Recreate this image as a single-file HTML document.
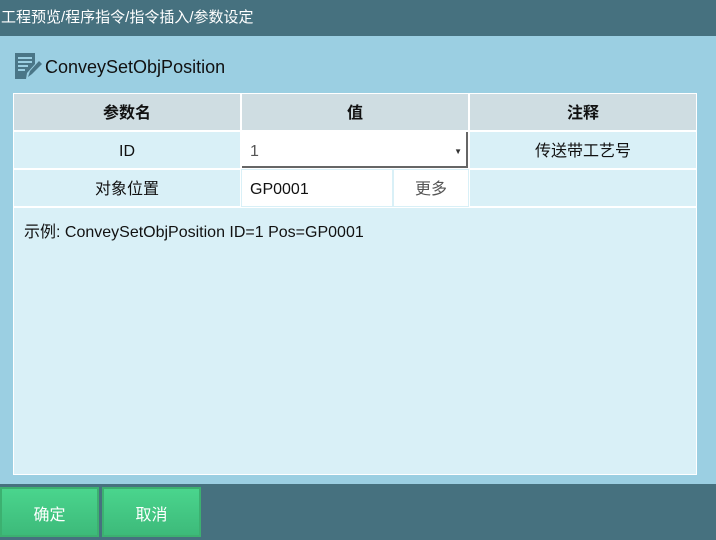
<!DOCTYPE html>
<html><head><meta charset="utf-8"><style>
*{margin:0;padding:0;box-sizing:border-box}
body{width:716px;height:540px;overflow:hidden;background:#9bcfe2;font-family:"Liberation Sans","Noto Sans CJK SC",sans-serif;position:relative}
.top{position:absolute;left:0;top:0;width:716px;height:36px;background:#46717f;color:#fff;font-size:15px;line-height:36px;padding-left:1px}
.title{position:absolute;left:45px;top:57px;font-size:18px;color:#111}
.ic{position:absolute;left:14px;top:52px}
.tbl{position:absolute;left:13px;top:93px;width:684px;height:115px;background:#fff}
.c{position:absolute;font-size:16px;color:#111;text-align:center;line-height:36px;height:36px;padding-top:2px;white-space:nowrap}
.h{background:#cfdde2;font-weight:bold}
.r{background:#d9f0f7}
.w{background:#fff;text-align:left;padding-left:8px}
.ex{position:absolute;left:13px;top:207px;width:684px;height:268px;background:#d9f0f7;border:1px solid #fff;font-size:16px;color:#111;padding:10px 10px}
.bot{position:absolute;left:0;top:484px;width:716px;height:56px;background:#46717f}
.btn{position:absolute;top:487px;width:99px;height:50px;background:linear-gradient(#4ad58d,#3dba7a);border:2px solid #3cb070;color:#fff;font-size:16px;line-height:46px;padding-top:4px;text-align:center}
</style></head><body>
<div class="top">工程预览/程序指令/指令插入/参数设定</div>
<svg class="ic" width="28" height="28" viewBox="0 0 28 28"><path d="M1 1h20v11l-8 9-1 6H1z" fill="#4a7687"/><path d="M4 6h14M4 10h14M4 14h10M4 18h7" stroke="#9bcfe2" stroke-width="2"/><path d="M14 25l2-6 9-10 3 3-10 10z" fill="#4a7687"/></svg>
<div class="title">ConveySetObjPosition</div>
<div class="tbl"></div>
<div class="c h" style="left:14px;top:94px;width:226px">参数名</div>
<div class="c h" style="left:242px;top:94px;width:226px">值</div>
<div class="c h" style="left:470px;top:94px;width:226px">注释</div>
<div class="c r" style="left:14px;top:132px;width:226px">ID</div>
<div class="c w" style="left:242px;top:132px;width:226px;color:#555;border-right:2px solid #666;border-bottom:2px solid #666">1<span style="position:absolute;right:4px;top:2px;font-size:8px;color:#333">▼</span></div>
<div class="c r" style="left:470px;top:132px;width:226px">传送带工艺号</div>
<div class="c r" style="left:14px;top:170px;width:226px">对象位置</div>
<div class="c w" style="left:241px;top:169px;width:228px;height:38px;border:1px solid #d9f0f7">GP0001</div>
<div class="c" style="left:392px;top:170px;width:76px;background:#fff;color:#555;border-left:2px solid #d9f0f7">更多</div>
<div class="c r" style="left:470px;top:170px;width:226px"></div>
<div class="ex">示例: ConveySetObjPosition ID=1 Pos=GP0001</div>
<div class="bot"></div>
<div class="btn" style="left:0">确定</div>
<div class="btn" style="left:102px">取消</div>
</body></html>
